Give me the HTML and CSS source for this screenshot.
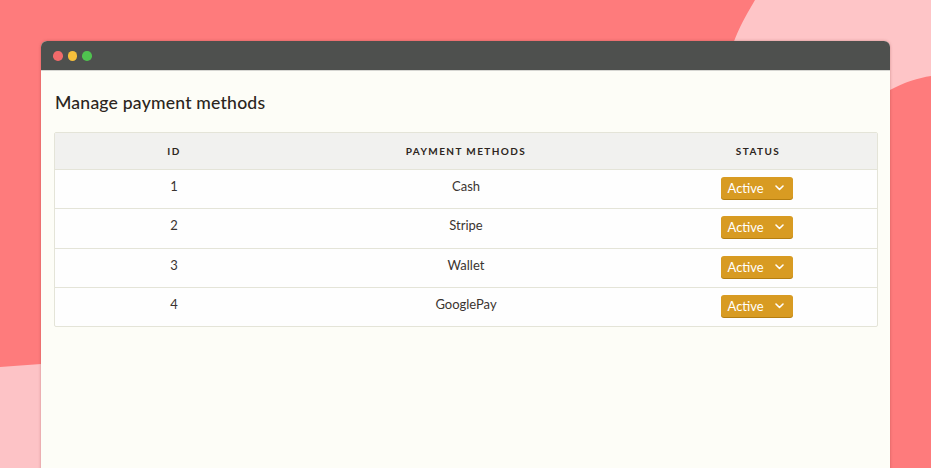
FILE: index.html
```html
<!DOCTYPE html>
<html>
<head>
<meta charset="utf-8">
<link rel="stylesheet" href="styles.css">
</head>
<body>
<svg class="bg" width="931" height="468" viewBox="0 0 931 468">
  <path d="M755 0 C742 22 728 46 722 90 L890 90 C905 82 918 78 931 76 L931 0 Z" fill="#fec5c7"/>
  <path d="M0 367 L41 364 L41 468 L0 468 Z" fill="#fdc3c6"/>
</svg>
<div class="window">
  <div class="titlebar">
    <span class="dot red"></span><span class="dot yellow"></span><span class="dot green"></span>
  </div>
  <div class="content">
    <h1 class="title">Manage payment methods</h1>
    <div class="table">
      <div class="row head">
        <div class="cell c1">ID</div>
        <div class="cell c2">PAYMENT METHODS</div>
        <div class="cell c3">STATUS</div>
      </div>
      <div class="row">
        <div class="cell c1">1</div>
        <div class="cell c2">Cash</div>
        <div class="cell c3"><span class="btn">Active<svg width="9" height="6" viewBox="0 0 9 6"><path d="M1 1 L4.5 4.5 L8 1" stroke="#fff" stroke-width="1.6" fill="none" stroke-linecap="round" stroke-linejoin="round"/></svg></span></div>
      </div>
      <div class="row">
        <div class="cell c1">2</div>
        <div class="cell c2">Stripe</div>
        <div class="cell c3"><span class="btn">Active<svg width="9" height="6" viewBox="0 0 9 6"><path d="M1 1 L4.5 4.5 L8 1" stroke="#fff" stroke-width="1.6" fill="none" stroke-linecap="round" stroke-linejoin="round"/></svg></span></div>
      </div>
      <div class="row">
        <div class="cell c1">3</div>
        <div class="cell c2">Wallet</div>
        <div class="cell c3"><span class="btn">Active<svg width="9" height="6" viewBox="0 0 9 6"><path d="M1 1 L4.5 4.5 L8 1" stroke="#fff" stroke-width="1.6" fill="none" stroke-linecap="round" stroke-linejoin="round"/></svg></span></div>
      </div>
      <div class="row last">
        <div class="cell c1">4</div>
        <div class="cell c2">GooglePay</div>
        <div class="cell c3"><span class="btn">Active<svg width="9" height="6" viewBox="0 0 9 6"><path d="M1 1 L4.5 4.5 L8 1" stroke="#fff" stroke-width="1.6" fill="none" stroke-linecap="round" stroke-linejoin="round"/></svg></span></div>
      </div>
    </div>
  </div>
</div>
</body>
</html>
```
FILE: styles.css
```css
html, body {
  margin: 0;
  height: 100%;
  overflow: hidden;
}
body {
  background: #fe7b7c;
  font-family: "Lato", "Noto Sans", sans-serif;
  padding: 41px 0 0 41px;
  box-sizing: border-box;
  position: relative;
}
.bg {
  position: absolute;
  left: 0;
  top: 0;
}
.window {
  position: relative;
  width: 849px;
  height: 440px;
  background: #fdfdf7;
  border-radius: 6px 6px 0 0;
  overflow: hidden;
  box-shadow: 0 0 3px rgba(120, 40, 40, 0.35);
}
.titlebar {
  background: #4e504e;
  border-bottom: 1px solid #d6d6d2;
  display: flex;
  align-items: center;
  padding-left: 12px;
  padding-top: 1px;
  box-sizing: border-box;
  height: 30px;
  gap: 5px;
}
.dot {
  width: 9.5px;
  height: 9.5px;
  border-radius: 50%;
}
.red { background: #f26a6a; }
.yellow { background: #f6bf3b; }
.green { background: #4fc24f; }
.content {
  padding: 21px 12px 0 13px;
}
.title {
  margin: 0 0 18px 1px;
  font-size: 17.6px;
  font-weight: 500;
  color: #2b2520;
  line-height: 22px;
  letter-spacing: 0.2px;
}
.table {
  border: 1px solid #e4e4d8;
  border-radius: 2px;
  background: #fefefe;
}
.row {
  display: flex;
  height: 38.3px;
  border-bottom: 1px solid #e4e4d8;
  align-items: center;
  font-size: 13px;
  color: #3a3430;
}
.row.last { border-bottom: none; }
.row.head {
  height: 36px;
  background: #f1f1ef;
  font-size: 10px;
  font-weight: 700;
  letter-spacing: 1.4px;
  color: #2d2520;
}
.cell {
  text-align: center;
  display: flex;
  justify-content: center;
}
.c1 { width: 238px; }
.c2 { width: 346px; }
.c3 { flex: 1; }
.row:not(.head) .c1, .row:not(.head) .c2 { margin-top: -6px; }
.btn {
  display: inline-flex;
  align-items: center;
  justify-content: space-between;
  box-sizing: border-box;
  width: 72px;
  height: 22px;
  padding: 0 9px 0 7px;
  background: #d89b22;
  border-radius: 3px;
  box-shadow: 0 1px 0 #b57e10;
  color: #fff;
  font-size: 13px;
  margin-right: 3px;
  margin-top: -2px;
}
```
